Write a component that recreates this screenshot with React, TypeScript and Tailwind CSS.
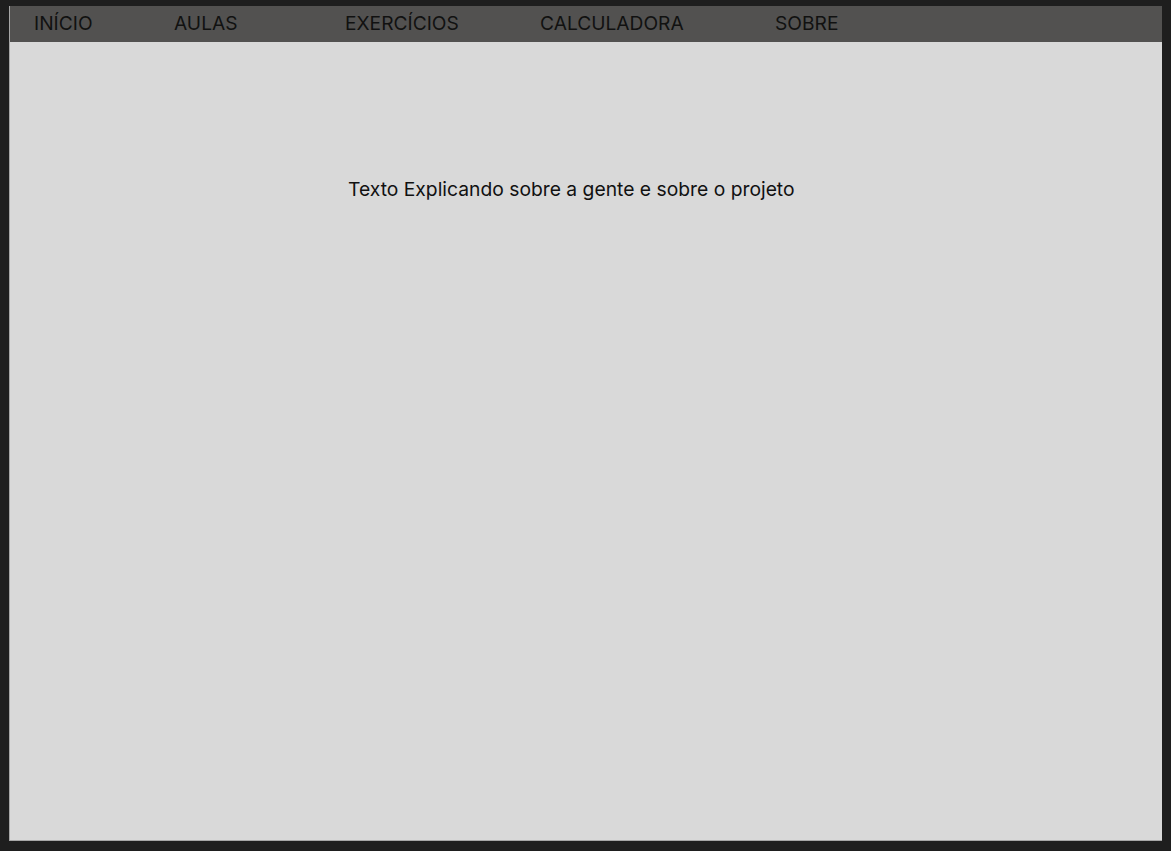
import React from "react";

const items = [
  { label: "INÍCIO", w: "w-[140px]" },
  { label: "AULAS", w: "w-[171px]" },
  { label: "EXERCÍCIOS", w: "w-[195px]" },
  { label: "CALCULADORA", w: "w-[235px]" },
  { label: "SOBRE", w: "w-[120px]" },
];

export default function App() {
  return (
    <div
      className="w-[1171px] h-[851px] bg-[#1e1e1e] pt-[6px] pl-[9px]"
      style={{ fontFamily: "Inter, 'Noto Sans', sans-serif" }}
    >
      <div className="w-[1153px] h-[835px] bg-[#d9d9d9] flex flex-col border-l border-b border-[#a6a6a6]">
        <nav className="h-[36px] bg-[#525150] flex items-center pl-[24px] shrink-0">
          {items.map((it) => (
            <div key={it.label} className={`${it.w} text-[19.2px] text-[#111111] leading-none`}>
              {it.label}
            </div>
          ))}
        </nav>
        <div className="pl-[338px] pt-[138px] text-[19.3px] text-[#111111] leading-none">
          Texto Explicando sobre a gente e sobre o projeto
        </div>
      </div>
    </div>
  );
}
